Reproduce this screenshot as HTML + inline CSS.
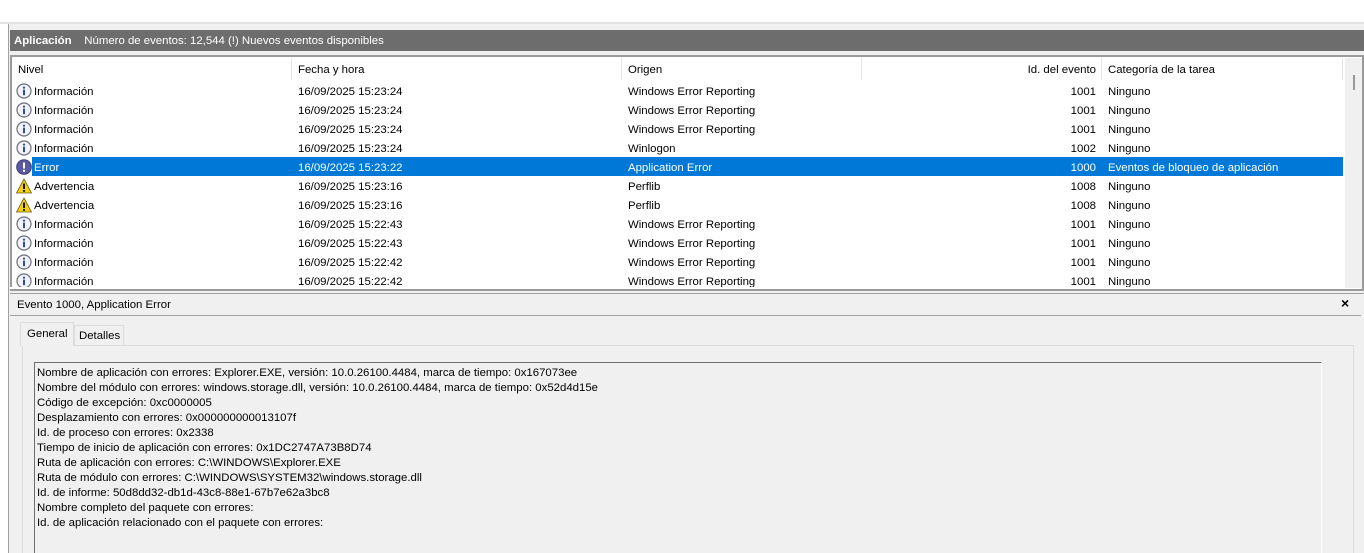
<!DOCTYPE html>
<html><head><meta charset="utf-8"><style>
*{margin:0;padding:0;box-sizing:border-box}
html,body{width:1364px;height:553px;overflow:hidden}
body{background:#f0f0f0;font-family:"Liberation Sans",sans-serif;font-size:11.4px;color:#000;position:relative}
.abs{position:absolute}
.t{position:absolute;white-space:nowrap;line-height:19px}
.sel{background:#0078d7;color:#fff}
</style></head><body>
<div class="abs" style="left:0;top:0;width:1364px;height:22px;background:#fff"></div>
<div class="abs" style="left:0;top:22px;width:1364px;height:2px;background:#e3e3e3"></div>
<div class="abs" style="left:0;top:24px;width:8px;height:529px;background:#fff"></div>
<div class="abs" style="left:8px;top:24px;width:1px;height:529px;background:#a0a0a0"></div>
<div class="abs" style="left:10px;top:30px;width:1354px;height:21px;background:#6d6d6d;color:#fff;line-height:22px;padding-left:4px"><b>Aplicación</b>&nbsp;&nbsp;&nbsp;&nbsp;Número de eventos: 12,544 (!) Nuevos eventos disponibles</div>
<div class="abs" style="left:10px;top:55px;width:1354px;height:236px;background:#fff;border:2px solid #9a9a9a"></div>
<div class="abs" style="left:1345px;top:58px;width:17px;height:230px;background:#f0f0f0"></div>
<div class="abs" style="left:1353px;top:75px;width:2px;height:15px;background:#999"></div>
<div class="t" style="left:18px;top:61px">Nivel</div>
<div class="abs" style="left:291px;top:58px;width:1px;height:22px;background:#e5e5e5"></div>
<div class="t" style="left:298px;top:61px">Fecha y hora</div>
<div class="abs" style="left:621px;top:58px;width:1px;height:22px;background:#e5e5e5"></div>
<div class="t" style="left:628px;top:61px">Origen</div>
<div class="abs" style="left:861px;top:58px;width:1px;height:22px;background:#e5e5e5"></div>
<div class="t" style="left:862px;top:61px;width:234px;text-align:right">Id. del evento</div>
<div class="abs" style="left:1101px;top:58px;width:1px;height:22px;background:#e5e5e5"></div>
<div class="t" style="left:1108px;top:61px">Categoría de la tarea</div>
<div class="abs" style="left:1342px;top:58px;width:1px;height:22px;background:#e5e5e5"></div>

<div id="rows"></div>
<script>
var d=[["i","Información","16/09/2025 15:23:24","Windows Error Reporting","1001","Ninguno"],
["i","Información","16/09/2025 15:23:24","Windows Error Reporting","1001","Ninguno"],
["i","Información","16/09/2025 15:23:24","Windows Error Reporting","1001","Ninguno"],
["i","Información","16/09/2025 15:23:24","Winlogon","1002","Ninguno"],
["e","Error","16/09/2025 15:23:22","Application Error","1000","Eventos de bloqueo de aplicación"],
["w","Advertencia","16/09/2025 15:23:16","Perflib","1008","Ninguno"],
["w","Advertencia","16/09/2025 15:23:16","Perflib","1008","Ninguno"],
["i","Información","16/09/2025 15:22:43","Windows Error Reporting","1001","Ninguno"],
["i","Información","16/09/2025 15:22:43","Windows Error Reporting","1001","Ninguno"],
["i","Información","16/09/2025 15:22:42","Windows Error Reporting","1001","Ninguno"],
["i","Información","16/09/2025 15:22:42","Windows Error Reporting","1001","Ninguno"]];
var h="";
var ic={i:'<svg width="16" height="16" viewBox="0 0 16 16"><circle cx="8" cy="8" r="7" fill="#f4f4f8" stroke="#6a6f80" stroke-width="1.2"/><circle cx="8" cy="4.6" r="1.1" fill="#2a4cb0"/><rect x="7" y="6.6" width="2" height="5.6" fill="#2a4cb0"/></svg>',
e:'<svg width="16" height="16" viewBox="0 0 16 16"><circle cx="8" cy="8" r="7.3" fill="#5b5aa0" stroke="#3d3c78"/><rect x="7" y="3.5" width="2" height="6" fill="#fff"/><rect x="7" y="10.8" width="2" height="2" fill="#fff"/></svg>',
w:'<svg width="16" height="16" viewBox="0 0 16 16"><path d="M8 1 L15.5 15 L0.5 15 Z" fill="#f5d20e" stroke="#6b5d10" stroke-width="0.8"/><rect x="7.1" y="5.5" width="1.8" height="5.5" fill="#000"/><rect x="7.1" y="12" width="1.8" height="1.8" fill="#000"/></svg>'};
for(var k=0;k<d.length;k++){var r=d[k],y=82+19*k,ty=y+1;
if(r[0]=="e")h+='<div class="abs sel" style="left:32px;top:'+(y-1)+'px;width:1311px;height:19px"></div>';
var c=r[0]=="e"?"color:#fff;":"";
h+='<div class="abs" style="left:16px;top:'+(y+1)+'px;width:16px;height:16px">'+ic[r[0]]+'</div>';
h+='<div class="t" style="'+c+'left:34px;top:'+ty+'px">'+r[1]+'</div>';
h+='<div class="t" style="'+c+'left:298px;top:'+ty+'px">'+r[2]+'</div>';
h+='<div class="t" style="'+c+'left:628px;top:'+ty+'px">'+r[3]+'</div>';
h+='<div class="t" style="'+c+'left:862px;top:'+ty+'px;width:234px;text-align:right">'+r[4]+'</div>';
h+='<div class="t" style="'+c+'left:1108px;top:'+ty+'px">'+r[5]+'</div>';}
document.getElementById("rows").innerHTML=h;
</script>
<div class="abs" style="left:10px;top:287px;width:1335px;height:4px;background:#fff"></div>
<div class="abs" style="left:10px;top:289px;width:1354px;height:2px;background:#9a9a9a"></div>
<div class="abs" style="left:10px;top:293px;width:1354px;height:1px;background:#a0a0a0"></div>
<div class="t" style="left:17px;top:296px">Evento 1000, Application Error</div>
<div class="t" style="left:1341px;top:294px;font-weight:bold;font-size:14px">×</div>
<div class="abs" style="left:10px;top:315px;width:1351px;height:1px;background:#a0a0a0"></div>
<div class="abs" style="left:22px;top:345px;width:1332px;height:210px;border:1px solid #dcdcdc;background:#f0f0f0"></div>
<div class="abs" style="left:20px;top:322px;width:54px;height:24px;border:1px solid #dcdcdc;border-bottom:none;background:#f0f0f0"></div>
<div class="t" style="left:27px;top:325px">General</div>
<div class="abs" style="left:74px;top:325px;width:50px;height:20px;border:1px solid #dcdcdc;border-bottom:none"></div>
<div class="t" style="left:79px;top:327px">Detalles</div>
<div class="abs" style="left:34px;top:362px;width:1288px;height:200px;border-top:1px solid #6d6d6d;border-left:1px solid #6d6d6d;border-right:1px solid #fff;background:#f0f0f0"></div>
<div class="abs" style="left:37px;top:366px;line-height:15px;white-space:pre">Nombre de aplicación con errores: Explorer.EXE, versión: 10.0.26100.4484, marca de tiempo: 0x167073ee
Nombre del módulo con errores: windows.storage.dll, versión: 10.0.26100.4484, marca de tiempo: 0x52d4d15e
Código de excepción: 0xc0000005
Desplazamiento con errores: 0x000000000013107f
Id. de proceso con errores: 0x2338
Tiempo de inicio de aplicación con errores: 0x1DC2747A73B8D74
Ruta de aplicación con errores: C:\WINDOWS\Explorer.EXE
Ruta de módulo con errores: C:\WINDOWS\SYSTEM32\windows.storage.dll
Id. de informe: 50d8dd32-db1d-43c8-88e1-67b7e62a3bc8
Nombre completo del paquete con errores: 
Id. de aplicación relacionado con el paquete con errores: </div>
</body></html>
